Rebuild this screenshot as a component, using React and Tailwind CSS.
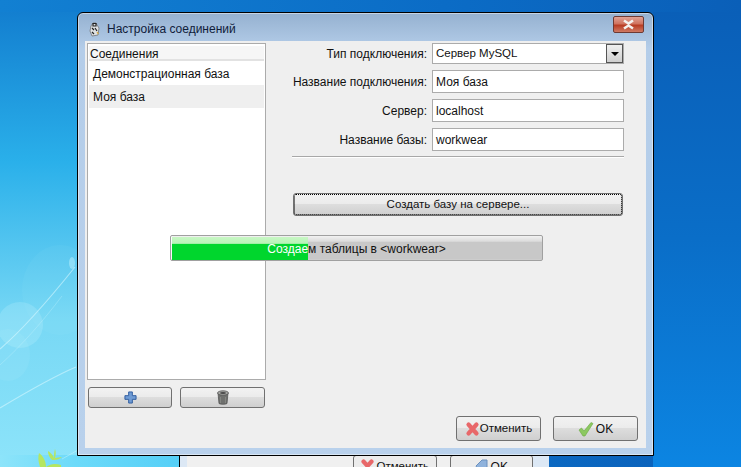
const font = "[font-family:'Liberation_Sans','DejaVu_Sans',sans-serif]";

function Field({ label, children }) {
  return (
    <div className="flex items-center">
      <span className="w-[141px] whitespace-nowrap pr-[5px] text-right">{label}</span>
      {children}
    </div>
  );
}

function TextBox({ value }) {
  return (
    <div className="flex h-[23px] w-[192px] items-center border border-[#ababab] bg-white pl-[3px]">{value}</div>
  );
}

function Btn({ className, children }) {
  return (
    <button
      type="button"
      className={
        "flex items-center justify-center rounded-[3px] border border-[#707070] bg-[linear-gradient(#f2f2f2_0%,#ebebeb_48%,#dddddd_50%,#cfcfcf_100%)] text-[#111] " +
        className
      }
    >
      {children}
    </button>
  );
}

function Plus() {
  return (
    <svg width="13" height="13" viewBox="0 0 14 14">
      <path d="M5 1h4v4h4v4H9v4H5V9H1V5h4z" fill="#6f9bd4" stroke="#2b5a9e" strokeWidth="1" />
    </svg>
  );
}

function Trash() {
  return (
    <svg width="14" height="15" viewBox="0 0 14 15">
      <path d="M2 3l1 10.5c1 1 7 1 8 0L12 3z" fill="#6f706e" stroke="#4b4b4b" strokeWidth="0.7" />
      <ellipse cx="7" cy="3" rx="5.5" ry="2.2" fill="#a5a6a3" stroke="#555" strokeWidth="0.8" />
      <ellipse cx="7" cy="3" rx="3" ry="1" fill="#4a4a4a" />
      <path d="M4.5 7v6M9.5 7v6" stroke="#8a8b88" strokeWidth="0.8" />
    </svg>
  );
}

function CrossIcon() {
  return (
    <svg width="15" height="16" viewBox="0 0 15 16">
      <path d="M3.5 3.5l8 9M11.5 3.5l-8 9" fill="none" stroke="#e8686a" strokeWidth="4.2" strokeLinecap="round" />
    </svg>
  );
}

function CheckIcon() {
  return (
    <svg width="16" height="16" viewBox="0 0 16 16">
      <path d="M1 9l2.5-2 2.5 3L13 1.5l2 1L7 15H5z" fill="#8cc860" stroke="#6aa843" strokeWidth="0.6" />
    </svg>
  );
}

function AppIcon() {
  return (
    <svg width="12" height="15" viewBox="0 0 12 15">
      <path d="M2 4l2-3h3l1 2 2 3-1 7-6 1-2-5z" fill="#dfe2e4" stroke="#6a6a6a" strokeWidth="0.7" />
      <path d="M4 1.5h3v2.5H4zM3 6l2 2M6 6l2 3M3 10l2 2" stroke="#222" strokeWidth="1.2" fill="none" />
      <path d="M8 10l1.5 2" stroke="#d9a93c" strokeWidth="1.2" />
    </svg>
  );
}

// обои: блики и листик в левом нижнем углу
function Wallpaper() {
  return (
    <svg className="absolute left-0 top-[240px]" width="78" height="227" viewBox="0 240 78 227">
      <circle cx="20" cy="325" r="23" fill="#c8f6fe" opacity="0.22" />
      <ellipse cx="8" cy="355" rx="22" ry="26" fill="#c8f6fe" opacity="0.1" />
      <ellipse cx="60" cy="290" rx="38" ry="45" fill="#c8f6fe" opacity="0.05" />
      <ellipse cx="72" cy="263" rx="3" ry="6" fill="#c8f6fe" opacity="0.45" />
      <path d="M0 349C28 325 55 292 75 267" fill="none" stroke="#dcfaff" strokeWidth="1.2" opacity="0.55" />
      <path d="M0 365C22 345 44 320 62 296" fill="none" stroke="#dcfaff" strokeWidth="1" opacity="0.25" />
      <path d="M0 408C25 393 50 378 76 367" fill="none" stroke="#dcfaff" strokeWidth="1.2" opacity="0.55" />
      <path d="M62 459L78 450" fill="none" stroke="#dcfaff" strokeWidth="1" opacity="0.4" />
      <path d="M40 467c-2-6-2-10-1-14 4 3 7 8 7 14z" fill="#b5e660" />
      <path d="M52 460c-3-3-4-6-4-9 3 2 5 4 6 7 0-3 0-6 1-9 1 3 1 6 0 9l7-1c-2 2-5 3-8 3z" fill="#b5e660" />
      <path d="M46 467c4-3 9-4 15-2v2z" fill="#b5e660" />
    </svg>
  );
}

export default function App() {
  return (
    <div
      className={
        "relative h-[467px] w-[741px] overflow-hidden bg-[linear-gradient(90deg,#1280d2_0%,#0b6cc6_60%,#0a5fb8_100%)] text-[12px] text-[#111] " +
        font
      }
    >
      <div className="absolute bottom-0 left-0 h-[455px] w-[78px] bg-[linear-gradient(#137fd0_0%,#2ab0ea_33%,#78d8f5_68%,#8de4fa_100%)]" />
      <div className="absolute bottom-0 left-0 h-[12px] w-[180px] bg-[linear-gradient(90deg,#8de4fa_0%,#6cdaf9_42%,#55cff7_100%)]" />
      <div className="absolute bottom-0 right-0 h-[455px] w-[88px] bg-[linear-gradient(#0a5fb8_0%,#0a6ec8_50%,#0c85e2_100%)]" />
      <Wallpaper />

      {/* окно позади */}
      <div className="absolute left-[179px] top-[455px] h-[12px] w-[370px] border-l border-black bg-[#dce8f5] pl-[7px] pr-[16px]">
        <div className="flex h-full bg-[#f0f0f0] pl-[166px]">
          <div className="flex h-[24px] w-[84px] items-start justify-center gap-[1px] rounded-[3px] border border-[#707070] bg-[#ececec] pt-[2px] text-[11.5px]">
            <CrossIcon /> Отменить
          </div>
          <div className="ml-[13px] flex h-[24px] w-[84px] items-start justify-center gap-[2px] rounded-[3px] border border-[#707070] bg-[#ececec] pt-[2px]">
            <svg width="14" height="14" viewBox="0 0 14 14">
              <path d="M1 8l6-6h5v10H3z" fill="#8fb2dc" stroke="#6a8fbd" />
            </svg>
            OK
          </div>
        </div>
      </div>

      {/* диалог */}
      <div className="absolute left-[77px] top-[12px] flex h-[444px] w-[577px] flex-col rounded-t-[6px] border border-black bg-[linear-gradient(#95b1d0_0%,#b4cde9_8%,#b9d1ec_100%)] px-[7px] pb-[7px] shadow-[inset_0_0_0_1px_rgba(255,255,255,0.45)]">
        <div className="flex h-[28px] shrink-0 items-center pl-[4px] pt-[4px]">
          <AppIcon />
          <span className="ml-[6px] text-[#10203a]">Настройка соединений</span>
          <div className="ml-auto mr-[2px] mt-[-10px] flex h-[17px] w-[31px] items-center justify-center rounded-[2px] border border-[#6e3a33] bg-[linear-gradient(#e0a295_0%,#d0735f_45%,#b83c23_55%,#cf7a64_100%)]">
            <svg width="13" height="11" viewBox="0 0 13 11">
              <path d="M2 1.5l4.5 3 4.5-3M2 9.5l4.5-3 4.5 3" fill="none" stroke="#f4f1ef" strokeWidth="2.6" />
            </svg>
          </div>
        </div>

        <div className="flex min-h-0 flex-1 bg-[#efefef]">
          {/* список соединений */}
          <div className="flex w-[206px] shrink-0 flex-col pl-[2px] pt-[2px]">
            <div className="flex h-[337px] w-[179px] flex-col border border-[#ababab] bg-white px-[1px] pt-[2px]">
              <div className="flex h-[15px] items-center border-b-2 border-[#e2e2e2] bg-[#f6f6f6] pl-[1px] pt-[2px] leading-none">Соединения</div>
              <div className="flex h-[24px] items-center pl-[4px] pt-[2px]">Демонстрационная база</div>
              <div className="flex h-[23px] items-center bg-[#efefef] pl-[4px] pt-[1px]">Моя база</div>
            </div>
            <div className="mt-[7px] flex gap-[8px] pl-[1px]">
              <Btn className="h-[21px] w-[84px]"><Plus /></Btn>
              <Btn className="h-[21px] w-[85px]"><Trash /></Btn>
            </div>
          </div>

          {/* свойства */}
          <div className="flex-1 pt-[2px]">
            <div className="flex flex-col gap-[6px]">
              <Field label="Тип подключения:">
                <div className="flex h-[21px] w-[192px] items-center justify-between border border-[#ababab] bg-white pl-[3px] text-[11.5px]">
                  Сервер MySQL
                  <div className="flex h-[19px] w-[17px] items-center justify-center border border-[#555] bg-[linear-gradient(#f0f0f0,#cfcfcf)]">
                    <div className="h-0 w-0 border-x-[4px] border-t-[4px] border-x-transparent border-t-black" />
                  </div>
                </div>
              </Field>
              <Field label="Название подключения:"><TextBox value="Моя база" /></Field>
              <Field label="Сервер:"><TextBox value="localhost" /></Field>
              <Field label="Название базы:"><TextBox value="workwear" /></Field>
            </div>
            <div className="ml-[1px] mt-[5px] h-[2px] w-[332px] border-t border-[#a8a8a8] bg-white" />
            <Btn className="ml-[2px] mt-[35px] h-[23px] w-[330px] text-[11.5px] outline-1 outline-offset-[-2px] outline-dotted outline-black">
              Создать базу на сервере...
            </Btn>
          </div>
        </div>

        <div className="absolute bottom-[14px] right-[15px] flex gap-[12px]">
          <Btn className="h-[25px] w-[85px] text-[11.5px]"><CrossIcon />Отменить</Btn>
          <Btn className="h-[25px] w-[85px] gap-[2px]"><CheckIcon />OK</Btn>
        </div>
      </div>

      {/* индикатор прогресса поверх окна */}
      <div className="absolute left-[170px] top-[235px] h-[26px] w-[373px] rounded-[2px] border border-[#a0a0a0] bg-[linear-gradient(#f1f1f1_0%,#dcdcdc_22%,#c8c8c8_26%,#c8c8c8_100%)] shadow-[inset_1px_0_1px_#fff]">
        <div className="absolute left-[1px] top-[1px] h-[23px] w-[136px] bg-[linear-gradient(#c8f7c4_0%,#b9f3b8_28%,#00d62d_30%,#00d62d_100%)]" />
        <div className="absolute inset-0 flex items-center justify-center pt-[1px]">
          <span className="text-[#111]">
            <span className="text-white">Создае</span>м таблицы в &lt;workwear&gt;
          </span>
        </div>
      </div>
    </div>
  );
}
